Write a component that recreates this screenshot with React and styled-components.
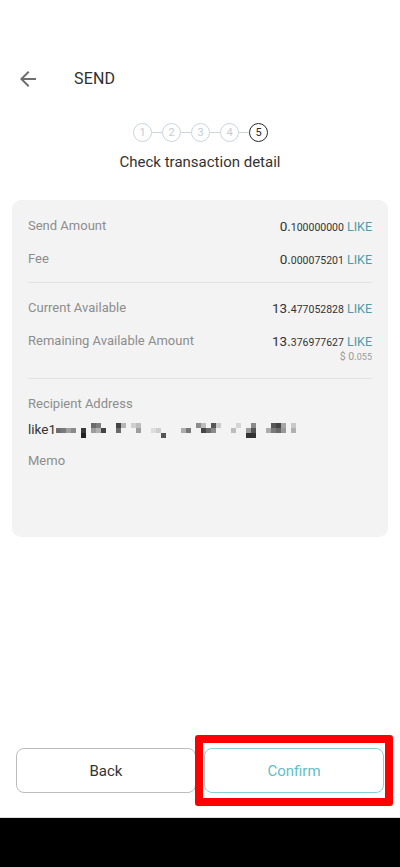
import React from "react";
import styled, { createGlobalStyle } from "styled-components";

const Global = createGlobalStyle`
  html, body { margin: 0; padding: 0; background: #fff; }
  body { font-family: Roboto, "Noto Sans", Arial, sans-serif; -webkit-font-smoothing: antialiased; }
  * { box-sizing: border-box; }
`;

const Page = styled.div`
  width: 400px;
  height: 867px;
  display: flex;
  flex-direction: column;
  background: #fff;
`;

const Content = styled.div`
  flex: 1;
  display: flex;
  flex-direction: column;
`;

const Header = styled.div`
  display: flex;
  align-items: center;
  padding: 67px 0 0 16px;
  height: 91px;
`;

const IconButton = styled.button`
  width: 24px;
  height: 24px;
  padding: 0;
  border: 0;
  background: none;
  display: flex;
  align-items: center;
  justify-content: center;
  color: #6e6e6e;
`;

const Title = styled.div`
  margin-left: 34px;
  font-size: 16px;
  line-height: 24px;
  color: #2f2f2f;
  letter-spacing: 0.2px;
`;

const Stepper = styled.div`
  display: flex;
  align-items: center;
  justify-content: center;
  margin-top: 32px;
  padding-left: 1px;
`;

const StepCircle = styled.div`
  width: 19px;
  height: 19px;
  border-radius: 50%;
  border: 1.3px solid ${(p) => (p.$active ? "#2a2a2a" : "#cdd4dd")};
  color: ${(p) => (p.$active ? "#2a2a2a" : "#c5ccd6")};
  font-size: 11px;
  display: flex;
  align-items: center;
  justify-content: center;
  line-height: 1;
`;

const Connector = styled.div`
  width: 10px;
  height: 1px;
  background: #cdd4dd;
`;

const StepTitle = styled.div`
  margin-top: 10px;
  text-align: center;
  font-size: 15px;
  line-height: 20px;
  color: #333;
`;

const Card = styled.div`
  margin: 28px 12px 0;
  height: 337px;
  background: #f3f3f3;
  border-radius: 9px;
  padding: 16px 16px;
`;

const Row = styled.div`
  display: flex;
  justify-content: space-between;
  align-items: flex-start;
  margin-top: ${(p) => p.$mt || 0}px;
`;

const Label = styled.div`
  font-size: 13px;
  line-height: 20px;
  height: 20px;
  color: #8d8d8d;
`;

const ValueCol = styled.div`
  display: flex;
  flex-direction: column;
  align-items: flex-end;
`;

const Value = styled.div`
  font-size: 13.5px;
  line-height: 20px;
  height: 20px;
  color: #333;
  white-space: nowrap;
`;

const Dec = styled.span`
  font-size: 10.5px;
  line-height: 1;
`;

const Unit = styled.span`
  color: #4b9ba9;
  font-size: 12.5px;
  line-height: 1;
  margin-left: 3px;
`;

const Fiat = styled.div`
  font-size: 10.5px;
  line-height: 14px;
  height: 14px;
  margin-top: -1px;
  color: #9a9a9a;
`;

const FiatDec = styled.span`
  font-size: 9px;
  line-height: 1;
`;

const Divider = styled.div`
  height: 1px;
  background: #e2e2e2;
  margin: ${(p) => p.$mt}px 0 15px;
`;

const Address = styled.div`
  margin-top: 5px;
  display: flex;
  align-items: center;
  font-size: 13.5px;
  line-height: 20px;
  height: 20px;
  color: #333;
`;

const MemoLabel = styled(Label)`
  margin-top: 12px;
`;

const Footer = styled.div`
  display: grid;
  grid-template-columns: 1fr 1fr;
  gap: 8px;
  padding: 0 16px;
  margin-bottom: 24px;
`;

const Button = styled.button`
  width: 100%;
  height: 45px;
  border-radius: 8px;
  background: #fff;
  font-family: inherit;
  font-size: 15px;
  border: ${(p) => (p.$primary ? "1.5px solid #86d0d6" : "1px solid #bcbcbc")};
  color: ${(p) => (p.$primary ? "#5fbfc8" : "#333")};
`;

const Highlight = styled.div`
  position: relative;
  display: flex;
`;

const RedBox = styled.div`
  position: absolute;
  left: -9px;
  right: -9px;
  top: -13px;
  bottom: -13px;
  border: 8px solid #ff0000;
  border-radius: 3px;
  pointer-events: none;
`;

const NavBar = styled.div`
  height: 50px;
  border-top: 1px solid #dcdcdc;
  background: #000;
`;

const cells = [
  [0, 1, "#6f6f6f"], [1, 1, "#7a7a7a"], [2, 1, "#a0a0a0"], [3, 1, "#8a8a8a"],
  [5, 1, "#3a3a3a"], [5, 2, "#222"],
  [7, 0, "#6a6a6a"], [8, 0, "#7d7d7d"], [7, 1, "#9c9c9c"], [8, 1, "#b0b0b0"], [9, 1, "#444"],
  [12, 0, "#444"], [12, 1, "#6a6a6a"], [13, 0, "#b5b5b5"],
  [15, 0, "#cfcfcf"], [16, 0, "#bdbdbd"], [16, 1, "#9d9d9d"],
  [19, 1, "#dddddd"], [20, 1, "#cfcfcf"], [21, 2, "#555"],
  [25, 1, "#adadad"], [26, 1, "#777"],
  [28, 0, "#8c8c8c"], [29, 0, "#bcbcbc"], [29, 1, "#464646"], [30, 1, "#6b6b6b"],
  [31, 0, "#575757"], [31, 1, "#8a8a8a"], [32, 0, "#cacaca"],
  [35, 1, "#bdbdbd"], [36, 0, "#d5d5d5"],
  [38, 1, "#9a9a9a"], [39, 0, "#8a8a8a"], [39, 1, "#555"], [38, 2, "#333"], [39, 2, "#333"],
  [42, 1, "#acacac"], [43, 0, "#585858"], [43, 1, "#7a7a7a"], [44, 0, "#454545"],
  [44, 1, "#686868"], [45, 0, "#a5a5a5"], [45, 1, "#989898"], [47, 0, "#c8c8c8"], [47, 1, "#b0b0b0"],
];

function Pixelated() {
  return (
    <svg width="245" height="15" viewBox="0 0 245 15" style={{ display: "block", marginTop: 3 }}>
      {cells.map(([c, r, col], i) => (
        <rect key={i} x={c * 5} y={r * 5} width="5" height="5" fill={col} />
      ))}
    </svg>
  );
}

function Amount({ int, dec }) {
  return (
    <Value>
      {int}.<Dec>{dec}</Dec>
      <Unit>LIKE</Unit>
    </Value>
  );
}

export default function App() {
  return (
    <Page>
      <Global />
      <Content>
        <Header>
          <IconButton aria-label="back">
            <svg width="24" height="24" viewBox="0 0 24 24">
              <path
                fill="currentColor"
                d="M20 11H7.83l5.59-5.59L12 4l-8 8 8 8 1.41-1.41L7.83 13H20v-2z"
              />
            </svg>
          </IconButton>
          <Title>SEND</Title>
        </Header>
        <Stepper>
          {[1, 2, 3, 4, 5].map((n) => (
            <React.Fragment key={n}>
              {n > 1 && <Connector />}
              <StepCircle $active={n === 5}>{n}</StepCircle>
            </React.Fragment>
          ))}
        </Stepper>
        <StepTitle>Check transaction detail</StepTitle>
        <Card>
          <Row>
            <Label>Send Amount</Label>
            <Amount int="0" dec="100000000" />
          </Row>
          <Row $mt={13}>
            <Label>Fee</Label>
            <Amount int="0" dec="000075201" />
          </Row>
          <Divider $mt={13} />
          <Row>
            <Label>Current Available</Label>
            <Amount int="13" dec="477052828" />
          </Row>
          <Row $mt={13}>
            <Label>Remaining Available Amount</Label>
            <ValueCol>
              <Amount int="13" dec="376977627" />
              <Fiat>
                $ 0.<FiatDec>055</FiatDec>
              </Fiat>
            </ValueCol>
          </Row>
          <Divider $mt={14} />
          <Label>Recipient Address</Label>
          <Address>
            like1
            <Pixelated />
          </Address>
          <MemoLabel>Memo</MemoLabel>
        </Card>
      </Content>
      <Footer>
        <Button>Back</Button>
        <Highlight>
          <Button $primary>Confirm</Button>
          <RedBox />
        </Highlight>
      </Footer>
      <NavBar />
    </Page>
  );
}
